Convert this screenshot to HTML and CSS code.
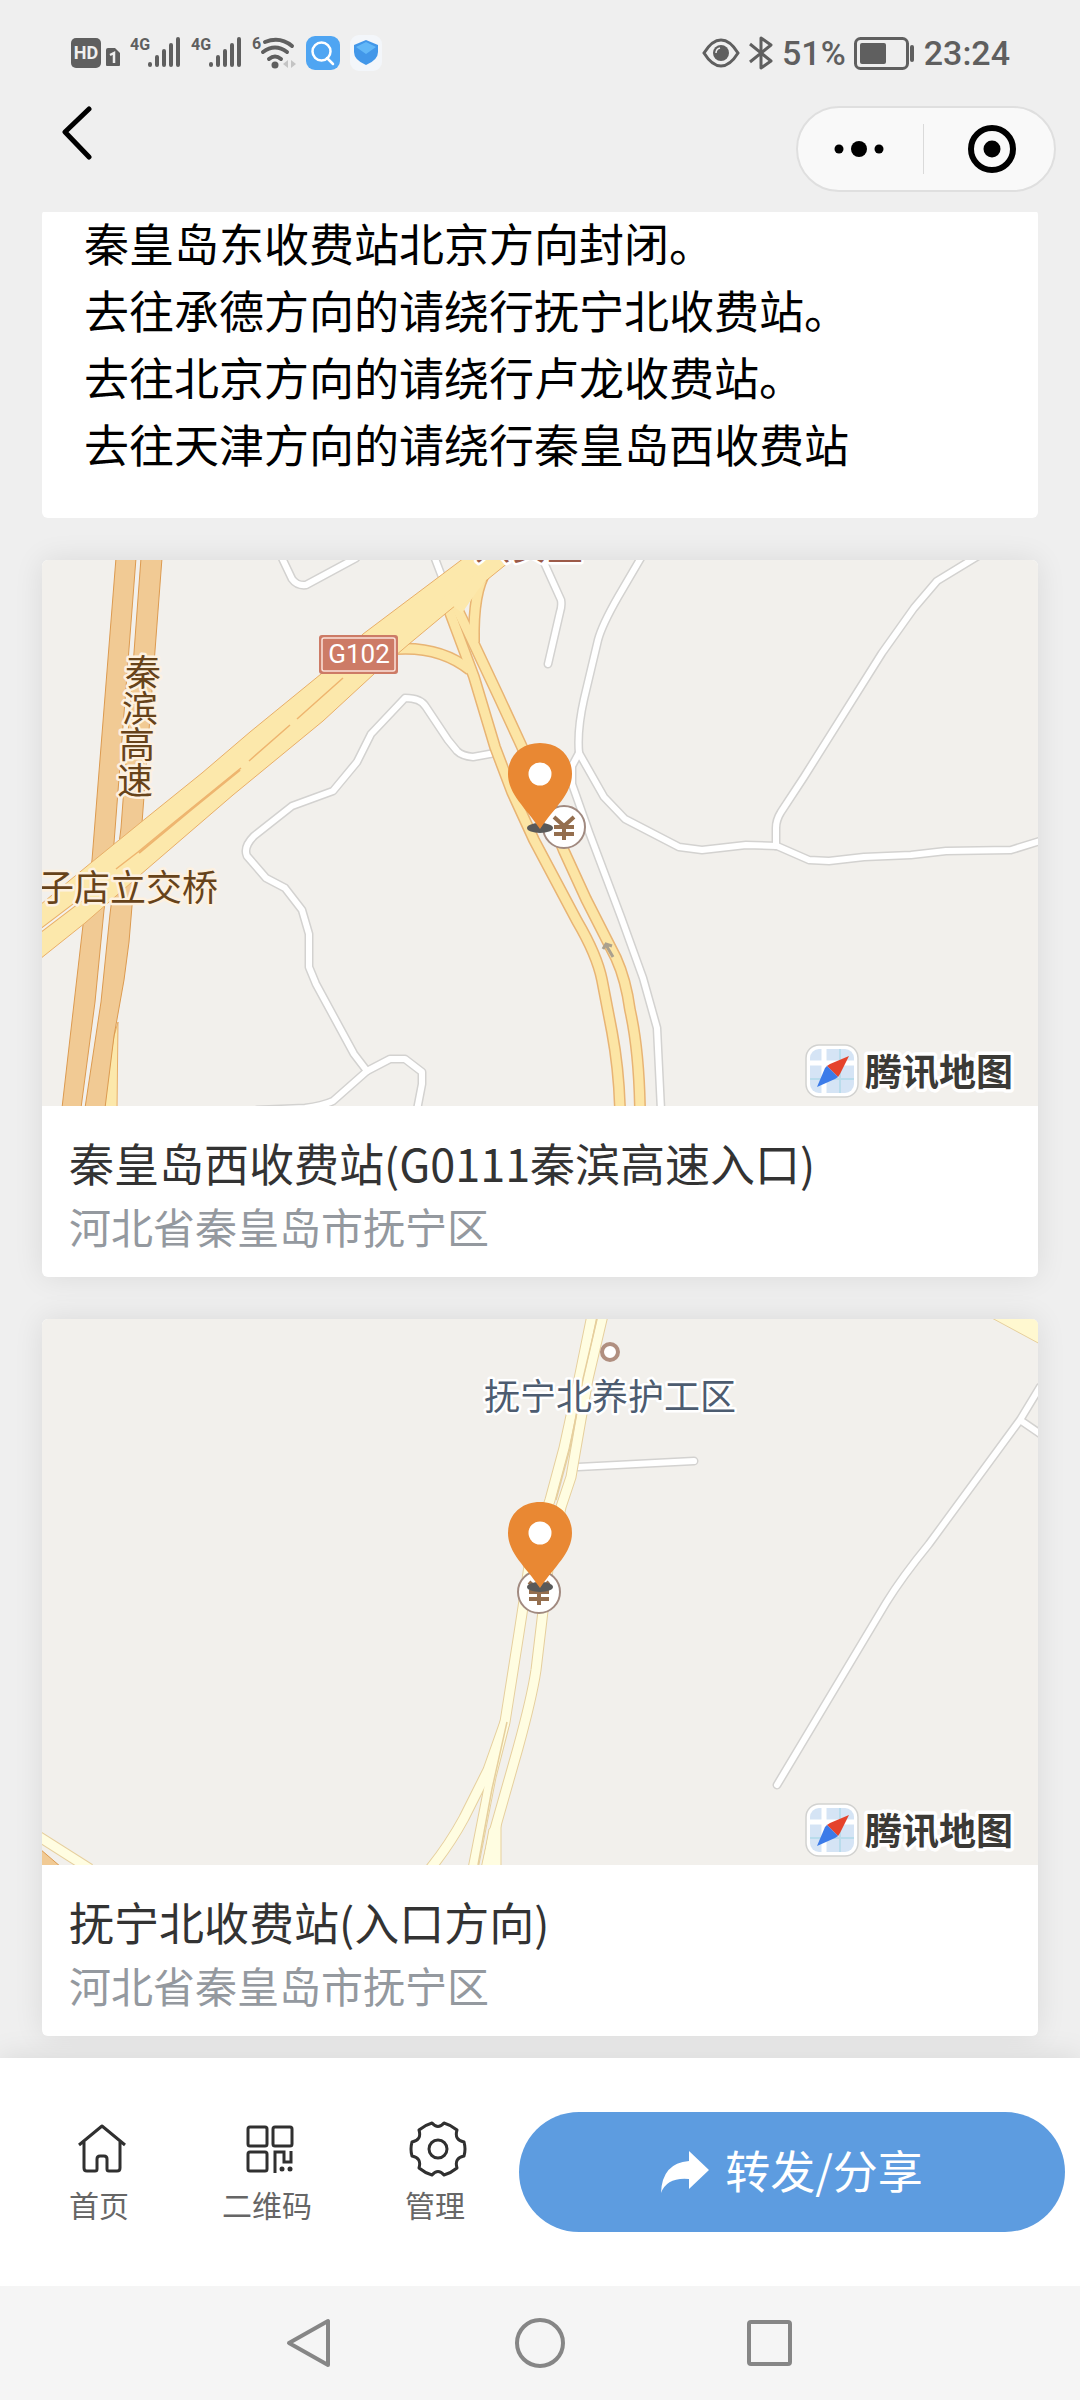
FILE: index.html
```html
<!DOCTYPE html>
<html lang="zh-CN">
<head>
    <meta charset="utf-8">
    <title>收费站绕行提示</title>
    <meta name="viewport" content="width=device-width, initial-scale=1">
    <link rel="stylesheet" href="styles.css">
</head>
<body>

<!-- shared map symbols -->
<svg class="symbols" aria-hidden="true">
    <symbol id="pin" viewBox="0 0 66 92">
        <ellipse cx="33" cy="86" rx="13" ry="5" fill="#595959"/>
        <path d="M33 1C14 1 1 14 1 32c0 20 18 34 32 55 14-21 32-35 32-55C65 14 52 1 33 1z" fill="#e98833"/>
        <circle cx="33" cy="32" r="11.5" fill="#fff"/>
    </symbol>
    <symbol id="toll" viewBox="0 0 46 46">
        <circle cx="23" cy="23" r="21" fill="#fff" stroke="#a18a80" stroke-width="2"/>
        <path d="M13 13l10 9 10-9M13 23h20M13 30h20M23 22v14" fill="none" stroke="#946e4e" stroke-width="4"/>
    </symbol>
    <symbol id="map-logo" viewBox="0 0 220 60">
        <rect x="4" y="4" width="52" height="52" rx="13" fill="#fff" stroke="#d2d2d0" stroke-width="1.5"/>
        <rect x="8" y="8" width="44" height="44" rx="9" fill="#d5e4f5"/>
        <path d="M22 8v44M8 22h44" stroke="#fff" stroke-width="5"/>
        <path d="M38 8v44M8 38h44" stroke="#b9dcec" stroke-width="2"/>
        <path d="M47 15L28 23l-3 2 11 11 2-3z" fill="#e5432c"/>
        <path d="M15 46l8-19 2-2 11 11-3 2z" fill="#3b7be9"/>
        <text class="logo-text" x="63" y="45">腾讯地图</text>
    </symbol>
</svg>

<header class="top">
    <div class="status-bar">
        <div class="status-left">
            <svg width="50" height="44" viewBox="0 -4 50 44">
                <rect x="1" y="3" width="30" height="30" rx="5" fill="#5f5f5f"/>
                <text class="hd-text" x="16" y="24">HD</text>
                <path d="M38 13h7l5 5v12q0 1-1 1H37q-1 0-1-1V15q0-2 2-2z" fill="#5f5f5f"/>
                <path d="M40 20l4-2v10" fill="none" stroke="#efefef" stroke-width="2.5"/>
            </svg>
            <svg width="51" height="44" viewBox="0 -4 51 44">
                <text class="net-text" x="0" y="15">4G</text>
                <path d="M20 29v1M27 22v8M34 16v14M41 10v20M48 4v26" stroke="#5f5f5f" stroke-width="4" stroke-linecap="round"/>
            </svg>
            <svg width="51" height="44" viewBox="0 -4 51 44">
                <text class="net-text" x="0" y="15">4G</text>
                <path d="M20 29v1M27 22v8M34 16v14M41 10v20M48 4v26" stroke="#5f5f5f" stroke-width="4" stroke-linecap="round"/>
            </svg>
            <svg width="44" height="44" viewBox="0 -4 44 44">
                <text class="net-text" x="0" y="14">6</text>
                <path d="M13 7q15-6 27 4M11 17q12-9 24 0M17 24q6-5 12 0" fill="none" stroke="#5f5f5f" stroke-width="4" stroke-linecap="round"/>
                <circle cx="23" cy="30" r="3.5" fill="#5f5f5f"/>
                <path d="M36 25v8l-5-4zM39 25v8l5-4z" fill="#c4c4c4"/>
            </svg>
            <svg width="34" height="44" viewBox="0 -4 34 44">
                <rect y="1" width="34" height="34" rx="9" fill="#4fa5f2"/>
                <circle cx="15.5" cy="16.5" r="9" fill="none" stroke="#fff" stroke-width="2.5"/>
                <path d="M21 23l6 6" stroke="#fff" stroke-width="2.5" stroke-linecap="round"/>
            </svg>
            <svg width="34" height="44" viewBox="0 -4 34 44">
                <rect width="32" height="36" rx="9" fill="#f3f6fa"/>
                <path d="M16 5l12 5v7q0 8-12 13Q4 25 4 17v-7z" fill="#4297e9"/>
                <path d="M16 7l10 5-10 7-10-7z" fill="#62b7f7"/>
            </svg>
        </div>
        <div class="status-right">
            <svg width="38" height="36" viewBox="0 0 38 36">
                <path d="M2 18Q10 5 19 5t17 13Q28 31 19 31T2 18z" fill="none" stroke="#5f5f5f" stroke-width="3"/>
                <circle cx="19" cy="18" r="8" fill="#5f5f5f"/>
                <path d="M14 18q0-4 4-5" fill="none" stroke="#efefef" stroke-width="1.5"/>
            </svg>
            <svg width="26" height="36" viewBox="0 0 26 36">
                <path d="M2 9l21 17-10 7V3l10 7L2 27" fill="none" stroke="#5f5f5f" stroke-width="3" stroke-linejoin="round"/>
            </svg>
            <span>51%</span>
            <svg width="62" height="36" viewBox="0 0 62 36">
                <rect x="1.5" y="3.5" width="52" height="30" rx="5" fill="none" stroke="#5f5f5f" stroke-width="3"/>
                <rect x="6" y="8" width="26" height="21" rx="2" fill="#5f5f5f"/>
                <rect x="56" y="10" width="4" height="17" rx="2" fill="#5f5f5f"/>
            </svg>
            <span>23:24</span>
        </div>
    </div>

    <div class="title-bar">
        <button type="button" class="back" aria-label="返回">
            <svg width="34" height="54" viewBox="0 0 34 54">
                <path d="M29 3L5 26l24 25" fill="none" stroke="#000" stroke-width="5" stroke-linecap="round" stroke-linejoin="round"/>
            </svg>
        </button>
        <div class="capsule">
            <button type="button" aria-label="更多">
                <svg width="54" height="50" viewBox="0 0 54 50">
                    <circle cx="6" cy="25" r="4.5"/>
                    <circle cx="26" cy="25" r="8"/>
                    <circle cx="46" cy="25" r="4.5"/>
                </svg>
            </button>
            <button type="button" aria-label="关闭">
                <svg width="50" height="50" viewBox="0 0 50 50">
                    <circle cx="25" cy="25" r="21" fill="none" stroke="#000" stroke-width="6"/>
                    <circle cx="25" cy="25" r="8.5"/>
                </svg>
            </button>
        </div>
    </div>
</header>

<main class="content">
    <section class="notice">
        <p>秦皇岛东收费站北京方向封闭。</p>
        <p>去往承德方向的请绕行抚宁北收费站。</p>
        <p>去往北京方向的请绕行卢龙收费站。</p>
        <p>去往天津方向的请绕行秦皇岛西收费站</p>
    </section>

    <article class="place">
        <svg class="map" viewBox="0 0 996 546" role="img" aria-label="秦皇岛西收费站地图">
            <!-- local roads: casing first, then surface -->
            <g class="road road-case">
                <path d="M240-2L250 19Q255 26 264 25L314-2M392-4L400 17M500-2L519 40Q520 46 518 52L506 104"/>
                <path d="M453 193L431 197Q420 196 415 191L406 180L384 147Q379 138 363 138L329 174L315 202L291 231L250 246L212 276Q201 287 205 296L224 318L243 328L260 350L267 374V407L274 424L312 494L325 511"/>
                <path d="M215 550L263 548Q280 546 291 541L325 511L348 499H363L380 512V524L375 550"/>
                <path d="M600-4L576 37Q560 65 556 80L542 139Q535 170 537 193L562 237L583 259L637 287L660 290L704 285L735 286L767 300L787 301L822 297L869 295L904 291L969 290L998 281"/>
                <path d="M936-4L895 21L872 48L840 93L762 217L739 252Q734 260 734 268V286"/>
                <path d="M537 193L530 206V224L547 272L579 357L601 418L615 468L619 550"/>
            </g>
            <g class="road road-fill">
                <path d="M240-2L250 19Q255 26 264 25L314-2M392-4L400 17M500-2L519 40Q520 46 518 52L506 104"/>
                <path d="M453 193L431 197Q420 196 415 191L406 180L384 147Q379 138 363 138L329 174L315 202L291 231L250 246L212 276Q201 287 205 296L224 318L243 328L260 350L267 374V407L274 424L312 494L325 511"/>
                <path d="M215 550L263 548Q280 546 291 541L325 511L348 499H363L380 512V524L375 550"/>
                <path d="M600-4L576 37Q560 65 556 80L542 139Q535 170 537 193L562 237L583 259L637 287L660 290L704 285L735 286L767 300L787 301L822 297L869 295L904 291L969 290L998 281"/>
                <path d="M936-4L895 21L872 48L840 93L762 217L739 252Q734 260 734 268V286"/>
                <path d="M537 193L530 206V224L547 272L579 357L601 418L615 468L619 550"/>
            </g>
            <!-- expressway -->
            <path class="trunk" d="M76 462L75 550H60L72 476z"/>
            <path class="express" d="M74-2L50 300L41 365L20 548H39L53 442L62 350L72 283L94-2z"/>
            <path class="express" d="M99-2L79 268L68 354L59 442L43 548H63L72 476L82 420L87 382L90 346L100 263L120-2z"/>
            <!-- ramps -->
            <g class="ramp ramp-case">
                <path d="M404 42L432 117L453 187L470 232L492 280L535 361Q555 395 560 420L570 472Q577 510 578 550"/>
                <path d="M412 42L432 84L456 135L480 187L522 291L544 339L574 398Q584 420 588 450Q597 490 598 550"/>
                <path d="M445 10Q431 30 432 82M354 89Q398 86 428 110"/>
            </g>
            <g class="ramp ramp-fill">
                <path d="M404 42L432 117L453 187L470 232L492 280L535 361Q555 395 560 420L570 472Q577 510 578 550"/>
                <path d="M412 42L432 84L456 135L480 187L522 291L544 339L574 398Q584 420 588 450Q597 490 598 550"/>
                <path d="M445 10Q431 30 432 82M354 89Q398 86 428 110"/>
            </g>
            <path class="trunk" d="M422-2L321 74L279 114L208 172L160 213L98 263L50 302L-2 345V399L43 363L105 309L191 235L281 161L332 114L367 84L403 54L472-2z"/>
            <path d="M401 52L410 45L420 53L436 30L444 21L440 10L398 40z" fill="#fce8ab"/>
            <path d="M301 118L255 159M248 165L207 201M199 208L130 264L96 292L74 309" fill="none" stroke="#eeb56f" stroke-width="1.5"/>
            <path d="M198 210L150 249L97 293" fill="none" stroke="#eeb56f" stroke-width="2"/>
            <path d="M44 336L-2 371" fill="none" stroke="#e8ae68" stroke-width="4"/>
            <path d="M44 336L-2 371" fill="none" stroke="#f5f2ec" stroke-width="2"/>
            <path d="M571 397L564 385M561 389L564 384L570 386" fill="none" stroke="#aaa08e" stroke-width="3"/>
            <!-- labels -->
            <rect x="277" y="75" width="79" height="39" rx="3" fill="#cd7b66"/>
            <rect x="280" y="78" width="73" height="33" rx="2" fill="none" stroke="#fbe3db" stroke-width="1.5"/>
            <text class="sign-text" x="317" y="103">G102</text>
            <text class="map-text red" x="487" y="0">兴安里</text>
            <text class="map-text brown" x="101" y="126">秦</text>
            <text class="map-text brown" x="98" y="162">滨</text>
            <text class="map-text brown" x="95" y="198">高</text>
            <text class="map-text brown" x="93" y="234">速</text>
            <text class="map-text brown" x="86" y="341">子店立交桥</text>
            <use href="#toll" x="499" y="244" width="46" height="46"/>
            <use href="#pin" x="465" y="182" width="66" height="92"/>
            <use href="#map-logo" x="760" y="481" width="220" height="60"/>
        </svg>
        <div class="place-info">
            <h2>秦皇岛西收费站(G0111秦滨高速入口)</h2>
            <p>河北省秦皇岛市抚宁区</p>
        </div>
    </article>

    <article class="place">
        <svg class="map" viewBox="0 0 996 546" role="img" aria-label="抚宁北收费站地图">
            <g class="road road-case">
                <path d="M536 148L652 142M998 68L978 101L887 225Q860 258 844 284L735 466M978 101L1000 116"/>
            </g>
            <g class="road road-fill">
                <path d="M536 148L652 142M998 68L978 101L887 225Q860 258 844 284L735 466M978 101L1000 116"/>
            </g>
            <g class="ramp county-case">
                <path d="M463 403L446 451L422 499Q408 525 388 550"/>
                <path d="M550-4L537 60L522 129L508 181L488 240L481 288L477 314L463 403L449 458L431 550"/>
                <path d="M561-4L546 60L534 129L529 158L519 188L506 250L501 292L494 351Q490 378 476 429L453 510L444 550"/>
                <path d="M-4 517L48 550"/>
            </g>
            <path d="M447 510L459 500V548H440z" fill="#fffde1" stroke="#e6cf9d"/>
            <g class="ramp county-fill">
                <path d="M463 403L446 451L422 499Q408 525 388 550"/>
                <path d="M550-4L537 60L522 129L508 181L488 240L481 288L477 314L463 403L449 458L431 550"/>
                <path d="M561-4L546 60L534 129L529 158L519 188L506 250L501 292L494 351Q490 378 476 429L453 510L444 550"/>
                <path d="M-4 517L48 550"/>
            </g>
            <path d="M555 0L541 60L528 129L514 181M465 403L450 470L436 546" fill="none" stroke="#e6cf9d" stroke-width="1.5"/>
            <path d="M948-2L998 25V-2z" fill="#fff8d0" stroke="#e6cf9d"/>
            <path class="express" d="M-2 530L19 548H-2z"/>
            <circle cx="568" cy="33" r="8" fill="#fff" stroke="#b08f80" stroke-width="4"/>
            <text class="map-text slate" x="568" y="91">抚宁北养护工区</text>
            <use href="#toll" x="474" y="250" width="46" height="46"/>
            <use href="#pin" x="465" y="182" width="66" height="92"/>
            <use href="#map-logo" x="760" y="481" width="220" height="60"/>
        </svg>
        <div class="place-info">
            <h2>抚宁北收费站(入口方向)</h2>
            <p>河北省秦皇岛市抚宁区</p>
        </div>
    </article>
</main>

<footer class="action-bar">
    <a href="#home" class="action">
        <svg width="60" height="60" viewBox="0 0 60 60">
            <path d="M8 26L31 7l23 19M13 23v26q0 3 3 3h8q2 0 2-2V40q0-3 3-3h4q3 0 3 3v10q0 2 2 2h8q3 0 3-3V23" fill="none" stroke="#303030" stroke-width="3" stroke-linejoin="round"/>
        </svg>
        <span>首页</span>
    </a>
    <a href="#qrcode" class="action">
        <svg width="60" height="60" viewBox="0 0 60 60">
            <g fill="none" stroke="#303030" stroke-width="3">
                <rect x="9" y="8" width="19" height="19" rx="2"/>
                <rect x="34" y="8" width="19" height="19" rx="2"/>
                <rect x="9" y="33" width="19" height="19" rx="2"/>
                <path d="M36 54V33h9v10h7V32"/>
            </g>
            <circle cx="43" cy="50" r="2.5" fill="#303030"/>
            <circle cx="51" cy="50" r="2.5" fill="#303030"/>
        </svg>
        <span>二维码</span>
    </a>
    <a href="#manage" class="action">
        <svg width="60" height="60" viewBox="0 0 60 60">
            <path d="M25 4Q31 11 37 4Q44 6 50 11Q47 21 57 23Q59 30 57 37Q47 39 50 49Q44 54 37 56Q31 49 25 56Q18 54 12 49Q15 39 5 37Q3 30 5 23Q15 21 12 11Q18 6 25 4z" fill="none" stroke="#303030" stroke-width="3" stroke-linejoin="round"/>
            <circle cx="31" cy="30" r="9" fill="none" stroke="#303030" stroke-width="3"/>
        </svg>
        <span>管理</span>
    </a>
    <button type="button" class="share">
        <svg width="48" height="42" viewBox="0 0 48 42">
            <path d="M28 0l20 19-20 19V28Q6 26 0 42 1 12 28 10z" fill="#fff"/>
        </svg>
        <span>转发/分享</span>
    </button>
</footer>

<nav class="system-nav">
    <button type="button" aria-label="返回">
        <svg width="54" height="54" viewBox="0 0 54 54">
            <path d="M45 5v44L6 27z" fill="none" stroke="#868686" stroke-width="4" stroke-linejoin="round"/>
        </svg>
    </button>
    <button type="button" aria-label="主屏幕">
        <svg width="54" height="54" viewBox="0 0 54 54">
            <circle cx="27" cy="27" r="23" fill="none" stroke="#868686" stroke-width="4"/>
        </svg>
    </button>
    <button type="button" aria-label="最近任务">
        <svg width="54" height="54" viewBox="0 0 54 54">
            <rect x="6" y="6" width="41" height="42" rx="2" fill="none" stroke="#868686" stroke-width="4"/>
        </svg>
    </button>
</nav>

</body>
</html>
```

FILE: styles.css
```css
* {
    box-sizing: border-box;
}

body {
    display: flex;
    flex-direction: column;
    min-height: 100vh;
    margin: 0;
    background: #efefef;
    color: #000;
    font-family: "Noto Sans CJK SC", sans-serif;
}

h2,
p {
    margin: 0;
    font-weight: 400;
}

svg {
    display: block;
    flex: none;
}

button {
    display: flex;
    align-items: center;
    justify-content: center;
    margin: 0;
    padding: 0;
    border: 0;
    background: none;
    font-family: inherit;
    cursor: pointer;
}

.symbols {
    position: absolute;
    width: 0;
    height: 0;
}

/* status bar and title bar */

.status-bar {
    display: flex;
    align-items: center;
    justify-content: space-between;
    height: 106px;
    padding: 0 70px;
}

.status-left,
.status-right {
    display: flex;
    align-items: center;
}

.status-left {
    gap: 10px;
}

.status-right {
    gap: 8px;
    color: #5f5f5f;
    font: 500 34px/40px Roboto, sans-serif;
}

.hd-text {
    fill: #efefef;
    font: bold 18px Roboto, sans-serif;
    text-anchor: middle;
}

.net-text {
    fill: #5f5f5f;
    font: bold 16px Roboto, sans-serif;
}

.title-bar {
    display: flex;
    align-items: flex-start;
    justify-content: space-between;
    height: 106px;
    padding: 0 24px 0 60px;
}

.capsule {
    display: flex;
    width: 260px;
    height: 86px;
    padding: 16px 0;
    border: 2px solid #dfdfdf;
    border-radius: 43px;
    background: #f9f9f9;
}

.capsule button {
    flex: 1;
}

.capsule button + button {
    padding-left: 6px;
    border-left: 1px solid #dadada;
}

/* content */

.content {
    display: flex;
    flex: 1;
    flex-direction: column;
    gap: 42px;
    padding: 0 42px 22px;
    overflow: hidden;
}

.notice {
    margin-top: -3px;
    padding: 0 42px 41px;
    border-radius: 6px;
    background: #fff;
    font-size: 45px;
    line-height: 67px;
}

.place {
    overflow: hidden;
    border-radius: 6px;
    background: #fff;
    box-shadow: 0 0 30px rgba(0, 0, 0, 0.09);
}

.place-info {
    padding: 24px 27px 21px;
}

.place-info h2 {
    color: #333;
    font-size: 45px;
    line-height: 66px;
}

.place-info p {
    color: #94999f;
    font-size: 42px;
    line-height: 60px;
}

/* map */

.map {
    width: 100%;
    height: auto;
    background: #f2f0ec;
}

.road,
.ramp {
    fill: none;
    stroke-linejoin: round;
}

.road {
    stroke-linecap: round;
}

.road-case {
    stroke: #d3d2d0;
    stroke-width: 9px;
}

.road-fill {
    stroke: #fff;
    stroke-width: 6px;
}

.ramp-case {
    stroke: #e8b474;
    stroke-width: 12px;
}

.ramp-fill {
    stroke: #fce5a5;
    stroke-width: 9px;
}

.county-case {
    stroke: #e6cf9d;
    stroke-width: 11px;
}

.county-fill {
    stroke: #fffde1;
    stroke-width: 9px;
}

.express {
    fill: #f1ca94;
    stroke: #dc9a4f;
}

.trunk {
    fill: #fce8ab;
    stroke: #e8ae68;
}

.map-text {
    font-size: 36px;
    text-anchor: middle;
    paint-order: stroke;
    stroke: #fff;
    stroke-width: 5px;
    stroke-linejoin: round;
}

.map-text.brown {
    fill: #67431a;
    stroke: #fdf1e0;
}

.map-text.red {
    fill: #9c5a48;
}

.map-text.slate {
    fill: #4d5c70;
}

.sign-text {
    fill: #fff;
    font: 26px Roboto, sans-serif;
    text-anchor: middle;
}

.logo-text {
    fill: #3b3a36;
    font-size: 37px;
    font-weight: 700;
    paint-order: stroke;
    stroke: #fff;
    stroke-width: 7px;
    stroke-linejoin: round;
}

/* bottom action bar */

.action-bar {
    display: grid;
    grid-template-columns: repeat(3, 168px) 1fr;
    align-items: center;
    height: 228px;
    padding: 0 15px;
    background: #fff;
    box-shadow: 0 0 30px rgba(0, 0, 0, 0.1);
}

.action {
    display: flex;
    flex-direction: column;
    align-items: center;
    gap: 4px;
    color: #666;
    font-size: 30px;
    line-height: 42px;
    text-decoration: none;
}

.action svg {
    margin-left: 4px;
}

.share {
    gap: 16px;
    height: 120px;
    border-radius: 60px;
    background: #5d9ce0;
    color: #fff;
    font-size: 45px;
}

.share span {
    padding-bottom: 6px;
}

/* system navigation */

.system-nav {
    display: flex;
    align-items: center;
    justify-content: center;
    gap: 176px;
    height: 114px;
    background: #f5f5f5;
}
```
